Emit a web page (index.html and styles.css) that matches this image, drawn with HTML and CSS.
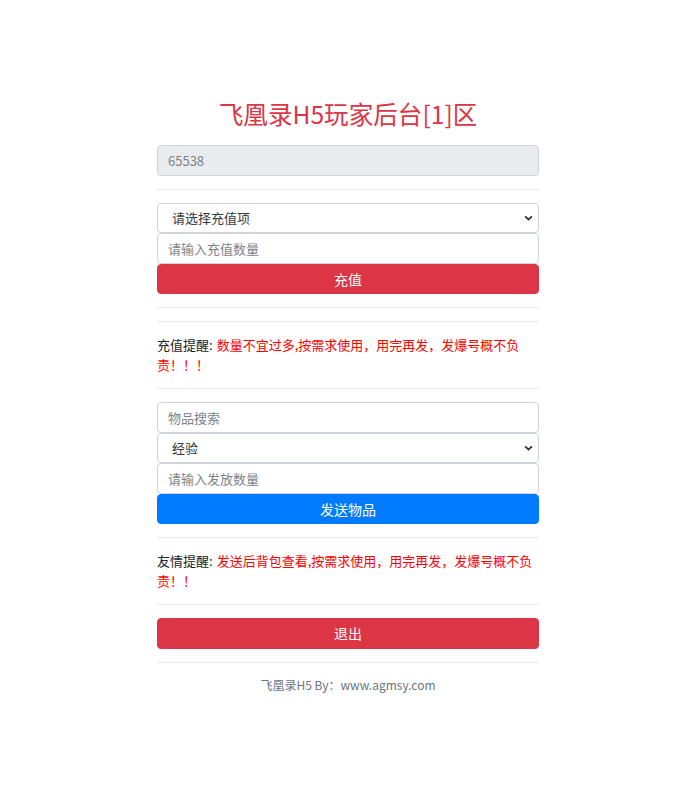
FILE: index.html
```html
<!DOCTYPE html>
<html lang="zh-CN">
<head>
<meta charset="utf-8">
<title>飞凰录H5玩家后台</title>
<link rel="stylesheet" href="styles.css">
</head>
<body>
<div class="wrap">
  <h1 class="title">飞凰录H5玩家后台[1]区</h1>
  <input class="field field-readonly" type="text" value="65538" readonly>
  <hr class="rule">
  <div class="stack">
    <select class="field field-select">
      <option>请选择充值项</option>
    </select>
    <input class="field" type="text" placeholder="请输入充值数量">
    <button class="btn btn-red">充值</button>
  </div>
  <hr class="rule">
  <hr class="rule">
  <p class="note"><span class="note-label">充值提醒:</span><span class="note-red">数量不宜过多,按需求使用，用完再发，发爆号概不负责！！！</span></p>
  <hr class="rule">
  <div class="stack">
    <input class="field" type="text" placeholder="物品搜索">
    <select class="field field-select">
      <option>经验</option>
    </select>
    <input class="field" type="text" placeholder="请输入发放数量">
    <button class="btn btn-blue">发送物品</button>
  </div>
  <hr class="rule">
  <p class="note"><span class="note-label">友情提醒:</span><span class="note-red">发送后背包查看,按需求使用，用完再发，发爆号概不负责！！</span></p>
  <hr class="rule">
  <button class="btn btn-red">退出</button>
  <hr class="rule">
  <p class="footer">飞凰录H5 By：www.agmsy.com</p>
</div>
</body>
</html>
```

FILE: styles.css
```css
html, body {
  margin: 0;
  padding: 0;
  background: #fff;
}
body {
  font-family: "Noto Sans", "Noto Sans CJK SC", sans-serif;
  font-size: 13px;
  line-height: 20px;
  color: #212529;
  padding-top: 1px;
}
.wrap {
  width: 382px;
  margin-left: 157px;
}
.title {
  margin: 97px 0 17px;
  font-size: 24.6px;
  line-height: 30px;
  font-weight: 400;
  color: #dc3545;
  text-align: center;
  font-family: "Noto Sans CJK SC", sans-serif;
}
.stack {
  display: flex;
  flex-direction: column;
}
.field {
  box-sizing: border-box;
  display: block;
  width: 100%;
  height: 30.5px;
  margin: 0;
  padding: 0 10px;
  border: 1px solid #ced4da;
  border-radius: 4px;
  background: #fff;
  font-family: "Noto Sans CJK SC", sans-serif;
  font-size: 13px;
  color: #495057;
  outline: none;
}
.field::placeholder {
  color: #7d8389;
}
.field-readonly {
  background: #e9ecef;
  color: #7d8389;
}
.field-select {
  -webkit-appearance: none;
  appearance: none;
  padding-left: 14px;
  background-image: url("data:image/svg+xml,%3Csvg xmlns='http://www.w3.org/2000/svg' width='10' height='6' viewBox='0 0 10 6'%3E%3Cpath d='M1.2 1.2 5 4.6 8.8 1.2' fill='none' stroke='%23333' stroke-width='2'/%3E%3C/svg%3E");
  background-repeat: no-repeat;
  background-position: right 5px center;
  background-size: 9px 6px;
  color: #343a40;
}
.btn {
  box-sizing: border-box;
  display: block;
  width: 100%;
  height: 30.5px;
  margin: 0;
  padding: 0;
  border: 1px solid transparent;
  border-radius: 4px;
  font-family: "Noto Sans CJK SC", sans-serif;
  font-size: 14px;
  color: #fff;
  cursor: pointer;
}
.btn-red {
  background: #dc3545;
  border-color: #dc3545;
}
.btn-blue {
  background: #007bff;
  border-color: #007bff;
}
.rule {
  margin: 13px 0;
  border: 0;
  border-top: 1px solid #e9e9e9;
  height: 0;
}
.note {
  margin: 0;
  font-family: "Noto Sans CJK SC", sans-serif;
  font-size: 13px;
  line-height: 20px;
}
.note-label {
  color: #212529;
  padding-right: 4px;
}
.note-red {
  color: #ff0000;
}
.footer {
  margin: 0;
  text-align: center;
  font-family: "Noto Sans CJK SC", sans-serif;
  font-size: 12px;
  line-height: 18px;
  color: #6c757d;
}
```
